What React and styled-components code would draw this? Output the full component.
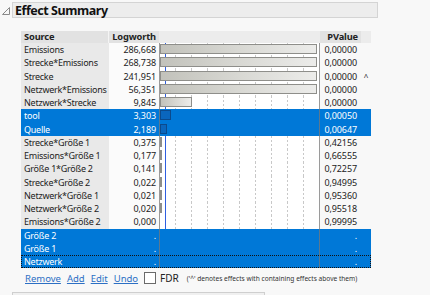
import React from "react";
import styled, { createGlobalStyle } from "styled-components";

const GlobalStyle = createGlobalStyle`
  body {
    margin: 0;
    background: #f8f8f8;
    font-family: "Noto Sans", "Open Sans", sans-serif;
    color: #222;
  }
`;

const Page = styled.div`
  width: 430px;
  height: 295px;
  overflow: hidden;
  padding-top: 1px;
  box-sizing: border-box;
`;

const OutlineHead = styled.div`
  display: flex;
  align-items: center;
  height: 18px;
`;

const Disclosure = styled.svg`
  width: 12px;
  height: 18px;
  flex: none;
`;

const TitleBar = styled.div`
  width: 366px;
  height: 16px;
  box-sizing: border-box;
  background: #ededed;
  border: 1px solid #d4d4d4;
  display: flex;
  align-items: center;
  padding-left: 2px;
  font-weight: 700;
  font-size: 12.5px;
  letter-spacing: -0.45px;
  color: #111;
`;

const Table = styled.div`
  margin: 12px 0 0 21px;
  width: 350px;
  font-size: 9px;
`;

const cols = "88px 50px 161px 41px 10px";

const HeadRow = styled.div`
  display: grid;
  grid-template-columns: ${cols};
  height: 12px;
  line-height: 12px;
  font-weight: 700;
  font-size: 9.3px;
  letter-spacing: -0.15px;
`;

const HeadCell = styled.div`
  background: ${(p) => (p.light ? "#ececec" : "#e2e2e2")};
  text-align: ${(p) => (p.right ? "right" : "left")};
  padding: 0 3px;
  border-right: ${(p) => (p.gap ? "1px solid #f4f4f4" : "none")};
  white-space: nowrap;
`;

const Row = styled.div`
  display: grid;
  grid-template-columns: ${cols};
  height: 13.25px;
  line-height: 13px;
  background: ${(p) => (p.sel ? "#0078d7" : "transparent")};
  color: ${(p) => (p.sel ? "#fff" : "#222")};
  outline: ${(p) => (p.focus ? "1px dotted #111" : "none")};
  outline-offset: -1px;
`;

const SourceCell = styled.div`
  padding-left: 3px;
  background: ${(p) => (p.sel ? "transparent" : "#e9e9e9")};
  white-space: nowrap;
  letter-spacing: -0.25px;
`;

const NumCell = styled.div`
  text-align: right;
  padding-right: 3px;
  letter-spacing: -0.1px;
  background: ${(p) => (p.sel ? "transparent" : "#fbfbfb")};
`;

const BarCell = styled.div`
  position: relative;
  border-left: 1px solid rgba(120, 120, 120, 0.75);
  border-right: 1px solid rgba(120, 120, 120, 0.75);
  background: ${(p) =>
    p.sel
      ? "transparent"
      : `linear-gradient(#2f5fe0, #2f5fe0) 5px 0 / 1px 100% no-repeat,
         repeating-linear-gradient(to bottom, transparent 0 2px, #fff 2px 4px),
         repeating-linear-gradient(to right, transparent 0 15px, #c8c8c8 15px 16px) 0 0 / 100% 100%,
         #fff`};
`;

const Bar = styled.div`
  position: absolute;
  left: 0;
  top: 1px;
  height: 10px;
  box-sizing: border-box;
  border: 1px solid ${(p) => (p.sel ? "#0b4a8c" : "#8e8e8a")};
  background: ${(p) =>
    p.sel ? "#0a66bd" : "linear-gradient(to right, #c2c2bb, #d8d8d3 50%, #ececea)"};
`;

const PCell = styled.div`
  text-align: right;
  padding-right: 4px;
  letter-spacing: -0.1px;
`;

const Mark = styled.div`
  text-align: center;
  font-size: 8px;
`;

const Controls = styled.div`
  display: flex;
  align-items: center;
  margin: 3px 0 0 25px;
  height: 14px;
  font-size: 9.5px;
`;

const LinkText = styled.a`
  color: #2c6fc4;
  text-decoration: underline;
  margin-right: 6px;
  cursor: pointer;
`;

const Check = styled.span`
  width: 10px;
  height: 10px;
  border: 1px solid #6a6a6a;
  background: #fff;
  margin: 0 4px 0 0;
`;

const FdrLabel = styled.span`
  font-size: 10px;
  margin-right: 8px;
`;

const Note = styled.span`
  font-size: 6.6px;
  color: #333;
  white-space: nowrap;
`;

const NextPanel = styled.div`
  margin: 7px 0 0 12px;
  width: 251px;
  height: 20px;
  border: 1px solid #cfcfcf;
  background: #f0f0f0;
`;

const rows = [
  { src: "Emissions", lw: "286,668", v: 286.668, p: "0,00000" },
  { src: "Strecke*Emissions", lw: "268,738", v: 268.738, p: "0,00000" },
  { src: "Strecke", lw: "241,951", v: 241.951, p: "0,00000", caret: true },
  { src: "Netzwerk*Emissions", lw: "56,351", v: 56.351, p: "0,00000" },
  { src: "Netzwerk*Strecke", lw: "9,845", v: 9.845, p: "0,00000" },
  { src: "tool", lw: "3,303", v: 3.303, p: "0,00050", sel: true },
  { src: "Quelle", lw: "2,189", v: 2.189, p: "0,00647", sel: true },
  { src: "Strecke*Größe 1", lw: "0,375", v: 0.375, p: "0,42156" },
  { src: "Emissions*Größe 1", lw: "0,177", v: 0.177, p: "0,66555" },
  { src: "Größe 1*Größe 2", lw: "0,141", v: 0.141, p: "0,72257" },
  { src: "Strecke*Größe 2", lw: "0,022", v: 0.022, p: "0,94995" },
  { src: "Netzwerk*Größe 1", lw: "0,021", v: 0.021, p: "0,95360" },
  { src: "Netzwerk*Größe 2", lw: "0,020", v: 0.02, p: "0,95518" },
  { src: "Emissions*Größe 2", lw: "0,000", v: 0, p: "0,99995" },
  { src: "Größe 2", lw: ".", p: ".", sel: true },
  { src: "Größe 1", lw: ".", p: ".", sel: true },
  { src: "Netzwerk", lw: ".", p: ".", sel: true, focus: true },
];

const barWidth = (v) => Math.min(157, Math.max(2, v * 3.2));

export default function App() {
  return (
    <Page>
      <GlobalStyle />
      <OutlineHead>
        <Disclosure viewBox="0 0 12 18">
          <polygon points="9.5,6.5 9.5,13.5 2.5,13.5" fill="none" stroke="#8a8a8a" strokeWidth="1" />
        </Disclosure>
        <TitleBar>Effect Summary</TitleBar>
      </OutlineHead>

      <Table>
        <HeadRow>
          <HeadCell gap>Source</HeadCell>
          <HeadCell right>Logworth</HeadCell>
          <HeadCell light />
          <HeadCell right>PValue</HeadCell>
          <HeadCell light />
        </HeadRow>
        {rows.map((r) => (
          <Row key={r.src} sel={r.sel} focus={r.focus}>
            <SourceCell sel={r.sel}>{r.src}</SourceCell>
            <NumCell sel={r.sel}>{r.lw}</NumCell>
            <BarCell sel={r.sel}>
              {r.v > 0 && <Bar sel={r.sel} style={{ width: barWidth(r.v) }} />}
            </BarCell>
            <PCell>{r.p}</PCell>
            <Mark>{r.caret ? "^" : ""}</Mark>
          </Row>
        ))}
      </Table>

      <Controls>
        <LinkText>Remove</LinkText>
        <LinkText>Add</LinkText>
        <LinkText>Edit</LinkText>
        <LinkText>Undo</LinkText>
        <Check />
        <FdrLabel>FDR</FdrLabel>
        <Note>('^' denotes effects with containing effects above them)</Note>
      </Controls>

      <NextPanel />
    </Page>
  );
}
